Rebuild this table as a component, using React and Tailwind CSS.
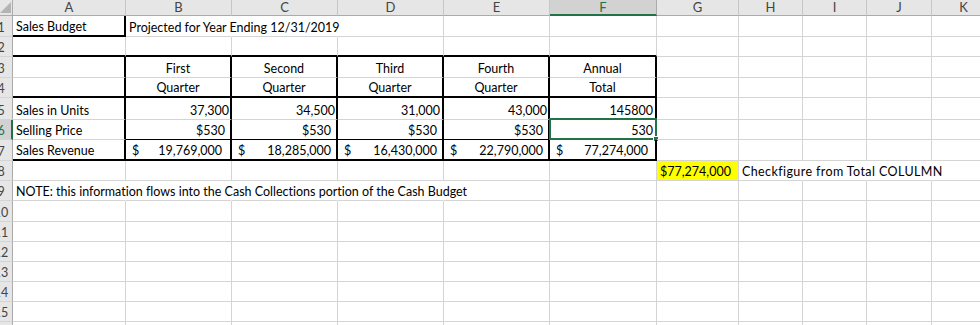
import clsx from 'clsx';

const COLS = ['A', 'B', 'C', 'D', 'E', 'F', 'G', 'H', 'I', 'J', 'K'];

const RIGHT = {
  grid: 'border-r border-r-[#d4d4d4]',
  none: 'border-r border-r-transparent',
  thick: 'border-r-2 border-r-black',
};
const BOTTOM = {
  grid: 'border-b border-b-[#d4d4d4]',
  thin: 'border-b border-b-black',
  thick: 'border-b-2 border-b-black',
};

// cell contents and borders, keyed like the sheet
const sheet = {
  A1: { text: 'Sales Budget', r: 'thick', b: 'thick', cls: 'pl-[3px]' },
  B1: { text: 'Projected for Year Ending 12/31/2019', r: 'none', cls: 'pl-[3px]' },
  C1: { r: 'none' },

  A2: { b: 'thick' }, B2: { b: 'thick' }, C2: { b: 'thick' },
  D2: { b: 'thick' }, E2: { b: 'thick' }, F2: { b: 'thick' },

  A3: { r: 'thick' },
  B3: { text: 'First', r: 'thick', cls: 'justify-center' },
  C3: { text: 'Second', r: 'thick', cls: 'justify-center' },
  D3: { text: 'Third', r: 'thick', cls: 'justify-center' },
  E3: { text: 'Fourth', r: 'thick', cls: 'justify-center' },
  F3: { text: 'Annual', r: 'thick', cls: 'justify-center' },

  A4: { r: 'thick', b: 'thick' },
  B4: { text: 'Quarter', r: 'thick', b: 'thick', cls: 'justify-center' },
  C4: { text: 'Quarter', r: 'thick', b: 'thick', cls: 'justify-center' },
  D4: { text: 'Quarter', r: 'thick', b: 'thick', cls: 'justify-center' },
  E4: { text: 'Quarter', r: 'thick', b: 'thick', cls: 'justify-center' },
  F4: { text: 'Total', r: 'thick', b: 'thick', cls: 'justify-center' },

  A5: { text: 'Sales in Units', r: 'thick', cls: 'pl-[3px]' },
  B5: { text: '37,300', r: 'thick', cls: 'justify-end pr-[1px]' },
  C5: { text: '34,500', r: 'thick', cls: 'justify-end pr-[1px]' },
  D5: { text: '31,000', r: 'thick', cls: 'justify-end pr-[2px]' },
  E5: { text: '43,000', r: 'thick', cls: 'justify-end pr-[1px]' },
  F5: { text: '145800', r: 'thick', cls: 'justify-end pr-[2px]' },

  A6: { text: 'Selling Price', r: 'thick', cls: 'pl-[3px]' },
  B6: { text: '$530', r: 'thick', b: 'thin', cls: 'justify-end pr-[5px]' },
  C6: { text: '$530', r: 'thick', b: 'thin', cls: 'justify-end pr-[5px]' },
  D6: { text: '$530', r: 'thick', b: 'thin', cls: 'justify-end pr-[5px]' },
  E6: { text: '$530', r: 'thick', b: 'thin', cls: 'justify-end pr-[5px]' },
  F6: { text: '530', r: 'thick', b: 'thin', cls: 'justify-end pr-[2px]', selected: true },

  A7: { text: 'Sales Revenue', r: 'thick', b: 'thick', cls: 'pl-[3px]' },
  B7: { money: '19,769,000', r: 'thick', b: 'thick', cls: 'pl-[6px] pr-[8px]' },
  C7: { money: '18,285,000', r: 'thick', b: 'thick', cls: 'pl-[6px] pr-[5px]' },
  D7: { money: '16,430,000', r: 'thick', b: 'thick', cls: 'pl-[6px] pr-[5px]' },
  E7: { money: '22,790,000', r: 'thick', b: 'thick', cls: 'pl-[6px] pr-[5px]' },
  F7: { money: '77,274,000', r: 'thick', b: 'thick', cls: 'pl-[6px] pr-[7px]' },

  G8: { text: '$77,274,000', cls: 'pl-[3px] bg-[#ffff00]' },
  H8: { text: 'Checkfigure from Total COLULMN', r: 'none', cls: 'pl-[3px] tracking-[0.4px]' },
  I8: { r: 'none' },
  J8: { r: 'none' },

  A9: { text: 'NOTE: this information flows into the Cash Collections portion of the Cash Budget', r: 'none', cls: 'pl-[3px]' },
  B9: { r: 'none' }, C9: { r: 'none' }, D9: { r: 'none' },
};

const ROWS = Array.from({ length: 16 }, (_, i) => i + 1);

function Cell({ data = {} }) {
  const { text, money, r = 'grid', b = 'grid', cls = '', selected } = data;
  return (
    <div className={clsx('relative flex items-end min-w-0 whitespace-nowrap leading-[15px] pb-[1px] text-black', RIGHT[r], BOTTOM[b], cls)}>
      {money ? (
        <>
          <span>$</span>
          <span className="ml-auto">{money}</span>
        </>
      ) : (
        text
      )}
      {selected && (
        <div className="absolute -left-[1px] -top-[2px] -right-[2px] -bottom-[1px] border-2 border-[#217346]">
          <div className="absolute -right-[4px] -bottom-[4px] w-[6px] h-[6px] bg-[#217346] border border-white" />
        </div>
      )}
    </div>
  );
}

function RowHead({ n, active }) {
  return (
    <div
      className={clsx(
        'flex items-end overflow-hidden border-b border-b-[#d4d4d4] leading-[15px] pb-[1px]',
        active
          ? 'bg-[#d2d2d2] border-r-2 border-r-[#217346] text-[#217346]'
          : 'bg-[#e6e6e6] border-r border-r-[#ababab] text-[#444]'
      )}
    >
      <div className="shrink-0 w-[24px] -ml-[11px] text-center">{n}</div>
    </div>
  );
}

function ColHead({ label, active }) {
  return (
    <div
      className={clsx(
        'flex items-center justify-center border-r leading-[15px] text-[13px]',
        active
          ? 'bg-[#d2d2d2] border-r-[#ababab] border-b-2 border-b-[#217346] text-[#217346]'
          : 'bg-[#e6e6e6] border-r-[#c6c6c6] border-b border-b-[#ababab] text-[#444]'
      )}
    >
      {label}
    </div>
  );
}

export default function App() {
  return (
    <div className="w-[980px] h-[325px] overflow-hidden bg-white font-['Lato','Liberation_Sans',sans-serif] text-[12.5px] [font-variant-ligatures:none]">
      <div className="grid w-max grid-cols-[13px_113px_106px_106px_106px_106px_107px_82px_64px_64px_65px_64px] grid-rows-[16px_21px_20px_21px_20px_22px_20px_21px_20px_20px_21px_20px_20px_20px_20px_20px_20px]">
        <div className="relative bg-[#e6e6e6] border-r border-b border-[#ababab]">
          <svg className="absolute right-[1px] bottom-[2px]" width="11" height="11" viewBox="0 0 11 11">
            <polygon points="11,0 11,11 0,11" fill="#b4b4b4" />
          </svg>
        </div>
        {COLS.map((c) => (
          <ColHead key={c} label={c} active={c === 'F'} />
        ))}

        {ROWS.map((n) => (
          <div key={n} className="contents">
            <RowHead n={n} active={n === 6} />
            {COLS.map((c) => (
              <Cell key={c + n} data={sheet[c + n]} />
            ))}
          </div>
        ))}
      </div>
    </div>
  );
}
